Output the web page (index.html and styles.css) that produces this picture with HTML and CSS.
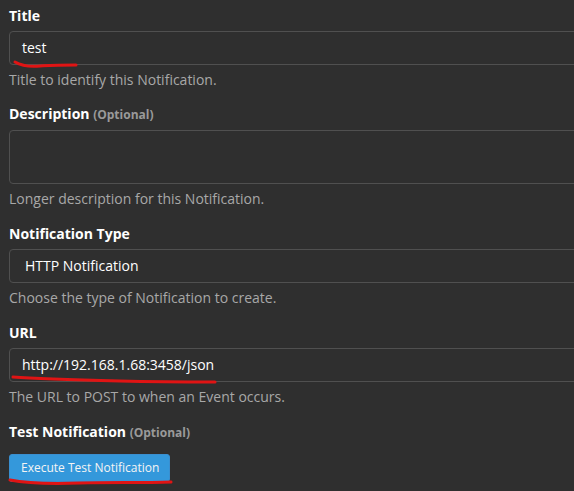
FILE: index.html
```html
<!DOCTYPE html>
<html>
<head>
<meta charset="utf-8">
<link rel="stylesheet" href="styles.css">
</head>
<body>
<div class="page">
  <form class="form">
    <div class="form-group first">
      <label class="control-label">Title</label>
      <div class="form-control input">test</div>
      <p class="help-block">Title to identify this Notification.</p>
    </div>
    <div class="form-group">
      <label class="control-label">Description <small class="optional">(Optional)</small></label>
      <div class="form-control textarea"></div>
      <p class="help-block">Longer description for this Notification.</p>
    </div>
    <div class="form-group">
      <label class="control-label">Notification Type</label>
      <div class="form-control select">HTTP Notification</div>
      <p class="help-block">Choose the type of Notification to create.</p>
    </div>
    <div class="form-group">
      <label class="control-label">URL</label>
      <div class="form-control input">http://192.168.1.68:3458/json</div>
      <p class="help-block">The URL to POST to when an Event occurs.</p>
    </div>
    <div class="form-group">
      <label class="control-label">Test Notification <small class="optional">(Optional)</small></label>
      <div class="btn-row">
        <button type="button" class="btn btn-primary">Execute Test Notification</button>
      </div>
    </div>
  </form>
  <svg class="marks" width="574" height="491" viewBox="0 0 574 491">
    <path d="M15 62 C 22 66, 30 67, 40 66 S 65 65, 76 65" />
    <path d="M13 377 C 40 379, 80 380, 120 381 S 190 382, 215 382" />
    <path d="M10 480 C 25 483, 50 484, 80 483 S 140 483, 171 482" />
  </svg>
</div>
</body>
</html>
```
FILE: styles.css
```css
html, body {
  margin: 0;
  padding: 0;
  background: #2f2f2f;
  overflow: hidden;
}
body {
  font-family: "Open Sans", "Liberation Sans", sans-serif;
  font-size: 14px;
  line-height: 20px;
  color: #ffffff;
}
.page {
  position: relative;
  width: 574px;
  height: 491px;
  overflow: hidden;
}
.form {
  width: 640px;
  padding: 6px 0 0 9px;
}
.form-group {
  margin-bottom: 15px;
}
.form-group.first {
  margin-bottom: 14px;
}
.control-label {
  display: block;
  font-weight: 700;
  margin-bottom: 5px;
  color: #ffffff;
}
.optional {
  font-size: 12px;
  color: #9a9a9a;
  font-weight: 700;
}
.form-control {
  box-sizing: border-box;
  width: 100%;
  height: 34px;
  padding: 6px 12px;
  border: 1px solid #505050;
  border-radius: 4px;
  background: #2f2f2f;
  color: #ffffff;
}
.select {
  padding-left: 15px;
}
.textarea {
  height: 54px;
}
.help-block {
  margin: 5px 0 0;
  color: #a8a8a8;
}
.btn-row {
  padding-top: 6px;
}
.btn {
  font-family: inherit;
  font-size: 12px;
  line-height: 17px;
  white-space: nowrap;
  padding: 4px 10px 5px 11px;
  border: 1px solid #3a8fd0;
  border-radius: 3px;
  background: #3498db;
  color: #f4f4f4;
  cursor: pointer;
}
.marks {
  position: absolute;
  left: 0;
  top: 0;
  pointer-events: none;
}
.marks path {
  fill: none;
  stroke: #e01414;
  stroke-width: 3;
  stroke-linecap: round;
}
```
